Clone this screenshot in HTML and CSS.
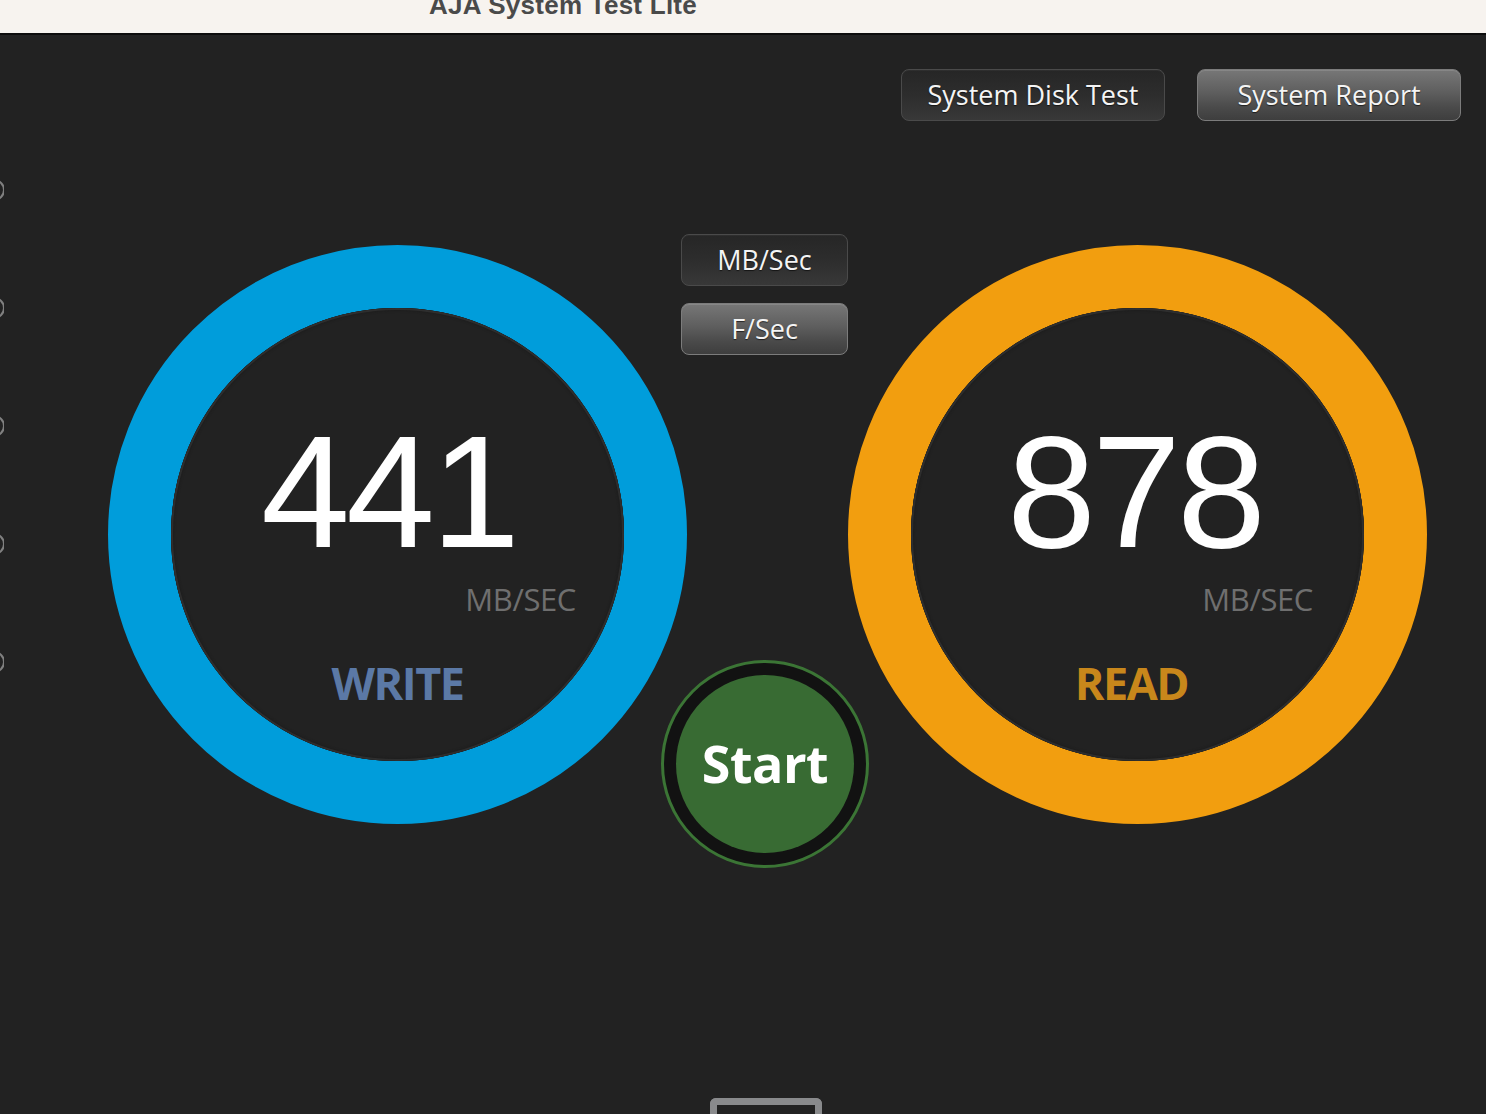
FILE: index.html
```html
<!DOCTYPE html>
<html lang="en">
<head>
<meta charset="utf-8">
<title>AJA System Test Lite</title>
<link rel="stylesheet" href="styles.css">
</head>
<body>
<div class="app">
  <header class="titlebar">
    <div class="title">AJA System Test Lite</div>
  </header>
  <div class="main">
    <div class="rail">
      <span class="dot"></span>
      <span class="dot"></span>
      <span class="dot"></span>
      <span class="dot"></span>
      <span class="dot"></span>
    </div>
    <div class="content">
      <div class="topbar">
        <button class="btn btn-dark">System Disk Test</button>
        <button class="btn btn-light">System Report</button>
      </div>
      <div class="gauges">
        <div class="ring ring-write">
          <div class="face">
            <div class="value value-write">441</div>
            <div class="unit">MB/SEC</div>
            <div class="label label-write">WRITE</div>
          </div>
        </div>
        <div class="center">
          <button class="btn btn-small btn-dark">MB/Sec</button>
          <button class="btn btn-small btn-light">F/Sec</button>
          <button class="start"><span class="start-inner">Start</span></button>
        </div>
        <div class="ring ring-read">
          <div class="face">
            <div class="value value-read">878</div>
            <div class="unit unit-read">MB/SEC</div>
            <div class="label label-read">READ</div>
          </div>
        </div>
      </div>
      <div class="dock"></div>
    </div>
  </div>
</div>
</body>
</html>
```

FILE: styles.css
```css
html, body {
  margin: 0;
  padding: 0;
  height: 1114px;
  overflow: hidden;
  background: #222222;
}

.app {
  display: flex;
  flex-direction: column;
  height: 1114px;
}

.titlebar {
  height: 33px;
  background: #f7f3ef;
  border-bottom: 2px solid #0d0d0d;
  overflow: hidden;
  flex-shrink: 0;
}

.title {
  font-family: "Liberation Sans", Arial, sans-serif;
  font-weight: bold;
  font-size: 26px;
  line-height: 29px;
  letter-spacing: 0.25px;
  color: #4a4a4a;
  padding-left: 429px;
  margin-top: -9px;
  white-space: nowrap;
}

.main {
  display: flex;
  flex: 1;
  background: #222222;
}

.rail {
  width: 4px;
  flex-shrink: 0;
  overflow: hidden;
  display: flex;
  flex-direction: column;
  gap: 96px;
  padding-top: 144px;
}

.dot {
  display: block;
  width: 22px;
  height: 22px;
  box-sizing: border-box;
  border: 2px solid #808080;
  border-radius: 50%;
  margin-left: -17px;
  flex-shrink: 0;
}

.content {
  flex: 1;
  display: flex;
  flex-direction: column;
}

.topbar {
  display: flex;
  justify-content: flex-end;
  gap: 32px;
  padding: 34px 25px 0 0;
}

.btn {
  box-sizing: border-box;
  width: 264px;
  height: 52px;
  border-radius: 8px;
  font-family: "Open Sans", sans-serif;
  font-size: 27px;
  line-height: 1;
  color: #f4f4f4;
  display: flex;
  align-items: center;
  justify-content: center;
  padding: 0 0 2px 0;
  margin: 0;
  text-shadow: 0 1px 1px rgba(0, 0, 0, 0.6);
  cursor: default;
}

.btn-dark {
  border: 1px solid #4a4a4a;
  background: linear-gradient(to bottom, #262626 0%, #2d2d2d 50%, #383838 100%);
  box-shadow: inset 0 1px 0 rgba(255, 255, 255, 0.04);
}

.btn-light {
  border: 1px solid #7c7c7c;
  background: linear-gradient(to bottom, #777777 0%, #5e5e5e 45%, #4a4a4a 75%, #3e3e3e 100%);
  box-shadow: inset 0 1px 0 rgba(255, 255, 255, 0.12);
}

.btn-small {
  width: 167px;
  margin-right: 6px;
}

.gauges {
  display: flex;
  align-items: flex-start;
  padding-left: 104px;
  margin-top: 124px;
}

.ring {
  box-sizing: border-box;
  width: 579px;
  height: 579px;
  border-radius: 50%;
  border: 63px solid;
  flex-shrink: 0;
}

.ring-write {
  border-color: #009ddb;
}

.ring-read {
  border-color: #f29e0f;
}

.face {
  box-sizing: border-box;
  width: 453px;
  height: 453px;
  border-radius: 50%;
  background: #222222;
  box-shadow: inset 0 0 0 2px #2e2e2e, inset 0 0 3px 2px #1a1a1a;
  display: flex;
  flex-direction: column;
  padding-top: 103px;
}

.value {
  font-family: "Liberation Sans", Arial, sans-serif;
  font-size: 160px;
  line-height: 162px;
  letter-spacing: -4px;
  color: #ffffff;
  text-align: center;
}

.value-write {
  padding-right: 18px;
}

.value-read {
  padding-right: 6px;
}

.unit {
  font-family: "Open Sans", sans-serif;
  font-size: 31px;
  line-height: 40px;
  letter-spacing: -0.4px;
  color: #6f6f6f;
  text-align: right;
  padding-right: 48px;
  margin-top: 6px;
}

.unit-read {
  padding-right: 51px;
}

.label {
  font-family: "Open Sans", sans-serif;
  font-weight: bold;
  font-size: 45px;
  line-height: 50px;
  letter-spacing: -1.5px;
  text-align: center;
  margin-top: 39px;
}

.label-write {
  color: #5b79a6;
}

.label-read {
  color: #c8871b;
  padding-right: 12px;
}

.center {
  width: 161px;
  flex-shrink: 0;
  display: flex;
  flex-direction: column;
  align-items: center;
  gap: 17px;
  margin-top: -11px;
}

.start {
  box-sizing: border-box;
  width: 208px;
  height: 208px;
  margin: 288px 5px 0 0;
  padding: 0;
  border-radius: 50%;
  border: 3px solid #3b7535;
  background: radial-gradient(circle, #121212 85%, #1c1c1c 100%);
  display: flex;
  align-items: center;
  justify-content: center;
  cursor: default;
}

.start-inner {
  width: 178px;
  height: 178px;
  border-radius: 50%;
  background: #386b33;
  display: flex;
  align-items: center;
  justify-content: center;
  font-family: "Open Sans", sans-serif;
  font-weight: bold;
  font-size: 52px;
  letter-spacing: -0.5px;
  color: #ffffff;
  padding-bottom: 4px;
  box-sizing: border-box;
}

.dock {
  box-sizing: border-box;
  width: 112px;
  height: 40px;
  margin: 230px 0 0 706px;
  border: 7px solid #898a8c;
  border-bottom: none;
  border-radius: 6px 6px 0 0;
  flex-shrink: 0;
}
```
